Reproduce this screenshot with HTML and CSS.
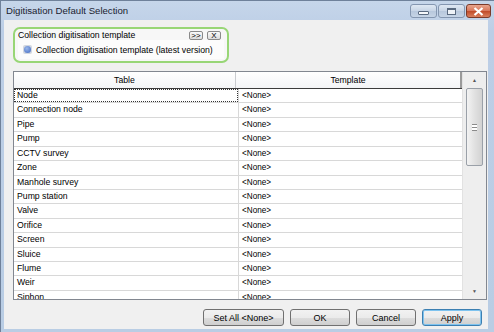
FILE: index.html
```html
<!DOCTYPE html>
<html lang="en">

<head>
    <meta charset="UTF-8">
    <title>Digitisation Default Selection</title>
    <link rel="stylesheet" href="styles.css">
</head>

<body>
    <div class="window">
        <div class="titlebar">
            <span class="title">Digitisation Default Selection</span>
            <div class="capbtns">
                <span class="cap min"><i></i></span>
                <span class="cap max"><i></i></span>
                <span class="cap close">
                    <svg width="11" height="9" viewBox="0 0 11 9"><path d="M1.5 1l8 7M9.5 1l-8 7" stroke="#fff" stroke-width="2.2"/></svg>
                </span>
            </div>
        </div>

        <div class="client">
            <div class="group">
                <div class="group-head">
                    <span>Collection digitisation template</span>
                    <span class="mini">&gt;&gt;</span>
                    <span class="mini">X</span>
                </div>
                <div class="group-list">
                    <span class="bullet"><i></i></span>
                    <span>Collection digitisation template (latest version)</span>
                </div>
            </div>

            <div class="grid">
                <div class="grid-body">
                    <div class="row head">
                        <div class="c1">Table</div>
                        <div class="c2">Template</div>
                    </div>
                    <div class="row"><div class="c1"><span class="focus">Node</span></div><div class="c2">&lt;None&gt;</div></div>
                    <div class="row"><div class="c1">Connection node</div><div class="c2">&lt;None&gt;</div></div>
                    <div class="row"><div class="c1">Pipe</div><div class="c2">&lt;None&gt;</div></div>
                    <div class="row"><div class="c1">Pump</div><div class="c2">&lt;None&gt;</div></div>
                    <div class="row"><div class="c1">CCTV survey</div><div class="c2">&lt;None&gt;</div></div>
                    <div class="row"><div class="c1">Zone</div><div class="c2">&lt;None&gt;</div></div>
                    <div class="row"><div class="c1">Manhole survey</div><div class="c2">&lt;None&gt;</div></div>
                    <div class="row"><div class="c1">Pump station</div><div class="c2">&lt;None&gt;</div></div>
                    <div class="row"><div class="c1">Valve</div><div class="c2">&lt;None&gt;</div></div>
                    <div class="row"><div class="c1">Orifice</div><div class="c2">&lt;None&gt;</div></div>
                    <div class="row"><div class="c1">Screen</div><div class="c2">&lt;None&gt;</div></div>
                    <div class="row"><div class="c1">Sluice</div><div class="c2">&lt;None&gt;</div></div>
                    <div class="row"><div class="c1">Flume</div><div class="c2">&lt;None&gt;</div></div>
                    <div class="row"><div class="c1">Weir</div><div class="c2">&lt;None&gt;</div></div>
                    <div class="row"><div class="c1">Siphon</div><div class="c2">&lt;None&gt;</div></div>
                </div>
                <div class="scrollbar">
                    <div class="arrow">&#9650;</div>
                    <div class="track">
                        <div class="thumb"><span class="grip"></span></div>
                    </div>
                    <div class="arrow">&#9660;</div>
                </div>
            </div>

            <div class="footer">
                <button class="btn wide">Set All &lt;None&gt;</button>
                <button class="btn">OK</button>
                <button class="btn">Cancel</button>
                <button class="btn default">Apply</button>
            </div>
        </div>
    </div>
</body>

</html>
```

FILE: styles.css
```css
body {
    margin: 0;
    font-family: 'Liberation Sans', Arial, sans-serif;
    font-size: 8.7px;
    color: #000;
    background-color: #ffffff;
}

.window {
    width: 494px;
    height: 332px;
    box-sizing: border-box;
    background: linear-gradient(#c6d6ea, #bccee6 30px, #b9cde4);
    border: 1px solid #6f819a;
    border-bottom: none;
    border-right: none;
    display: flex;
    flex-direction: column;
    overflow: hidden;
}

.titlebar {
    height: 19px;
    display: flex;
    align-items: flex-start;
    padding-left: 5px;
}

.title {
    font-size: 9.6px;
    color: #1a2230;
    margin-top: 4px;
}

.capbtns {
    margin-left: auto;
    margin-right: 3px;
    margin-top: 3px;
    display: flex;
    gap: 1px;
}

.cap {
    width: 25px;
    height: 12px;
    border: 1px solid #8496b0;
    border-radius: 3px;
    background: linear-gradient(#dfe8f3, #c7d4e5 50%, #b7c7dc 51%, #c6d4e6);
    display: flex;
    align-items: center;
    justify-content: center;
}

.cap.min i {
    width: 9px;
    height: 2px;
    margin-top: 3px;
    background: #f6f8fb;
    border: 1px solid #5a6a80;
    border-radius: 1px;
}

.cap.max i {
    width: 7px;
    height: 4px;
    background: #eef2f7;
    border: 1px solid #5a6a80;
    border-top-width: 2px;
}

.cap.close {
    width: 23px;
    border-color: #7a3a2a;
    background: linear-gradient(#e8a58e, #d7765a 50%, #c04a28 51%, #d9805e);
}

.client {
    flex: 1;
    background-color: #f0f0f0;
    margin: 0 6px 3px 3px;
    padding: 7px 0 0 9px;
    display: flex;
    flex-direction: column;
}

.group {
    width: 206px;
    height: 32px;
    border: 2px solid #98d676;
    border-radius: 7px;
    background-color: #f7f7f7;
    padding: 0 3px 0 3px;
}

.group-head {
    display: flex;
    align-items: center;
    height: 10px;
    padding-top: 1px;
    padding-right: 3px;
    gap: 4px;
}

.group-head span:first-child {
    flex: 1;
}

.mini {
    font-size: 8px;
    line-height: 7px;
    height: 7px;
    min-width: 12px;
    text-align: center;
    border: 1px solid #8a8a8a;
    border-radius: 2px;
    background: linear-gradient(#fafafa, #dcdcdc);
}

.group-list {
    margin-top: 0;
    height: 19px;
    background-color: #fcfcfc;
    display: flex;
    align-items: center;
    gap: 4px;
    padding-left: 5px;
}

.bullet {
    width: 9px;
    height: 9px;
    background-color: #d2d7e0;
    border-radius: 2px;
    display: flex;
    align-items: center;
    justify-content: center;
}

.bullet i {
    width: 7px;
    height: 7px;
    border-radius: 50%;
    background: radial-gradient(circle at 40% 35%, #9bb8ea, #3f67c2);
}

.grid {
    margin-top: 8px;
    margin-right: 1px;
    height: 227px;
    border: 1px solid #828790;
    background-color: #ffffff;
    display: flex;
    overflow: hidden;
}

.grid-body {
    width: 448px;
    overflow: hidden;
}

.row {
    display: flex;
    height: 13.43px;
    border-bottom: 1px solid #d8d8d8;
    line-height: 13px;
}

.row .c1 {
    width: 221px;
    padding-left: 3px;
    border-right: 1px solid #d8d8d8;
}

.row .c2 {
    flex: 1;
    padding-left: 3px;
    font-size: 8.2px;
}

.row.head {
    height: 16px;
    line-height: 16px;
    border-bottom: 1px solid #3c3c3c;
    background: linear-gradient(#ffffff, #f3f4f6);
}

.row.head .c1,
.row.head .c2 {
    text-align: center;
    font-size: 8.7px;
    padding-left: 0;
    border-right: 1px solid #c9cbcf;
}

.row.head .c2 {
    border-right: 2px solid #9a9a9a;
}

.focus {
    display: block;
    margin-left: -3px;
    padding-left: 3px;
    outline: 1px dotted #333;
    outline-offset: -1px;
}

.scrollbar {
    flex: 1;
    background-color: #eeeeee;
    border-left: 1px solid #e2e2e2;
    display: flex;
    flex-direction: column;
    align-items: center;
    padding: 0 3px;
}

.arrow {
    height: 16px;
    font-size: 5px;
    line-height: 16px;
    color: #555;
}

.track {
    flex: 1;
    width: 100%;
}

.thumb {
    height: 78px;
    box-sizing: border-box;
    border: 1px solid #9aa0a8;
    border-radius: 2px;
    background: linear-gradient(90deg, #f3f3f3, #e1e1e1 50%, #d2d2d2);
    display: flex;
    align-items: center;
    justify-content: center;
}

.grip {
    width: 5px;
    height: 5px;
    border-top: 1px solid #8a8a8a;
    border-bottom: 1px solid #8a8a8a;
    background: linear-gradient(#fff 0 2px, #8a8a8a 2px 3px, #fff 3px);
}

.footer {
    display: flex;
    justify-content: flex-end;
    gap: 6px;
    margin-top: 9px;
    margin-right: 6px;
}

.btn {
    font-family: 'Liberation Sans', Arial, sans-serif;
    font-size: 9px;
    width: 60px;
    height: 17px;
    padding: 0;
    border: 1px solid #707070;
    border-radius: 3px;
    background: linear-gradient(#f2f2f2, #ebebeb 50%, #dddddd 51%, #cfcfcf);
    color: #000;
}

.btn.wide {
    width: 81px;
}

.btn.default {
    border-color: #3c7fb1;
    box-shadow: inset 0 0 0 1px #7ec3ef;
}
```
